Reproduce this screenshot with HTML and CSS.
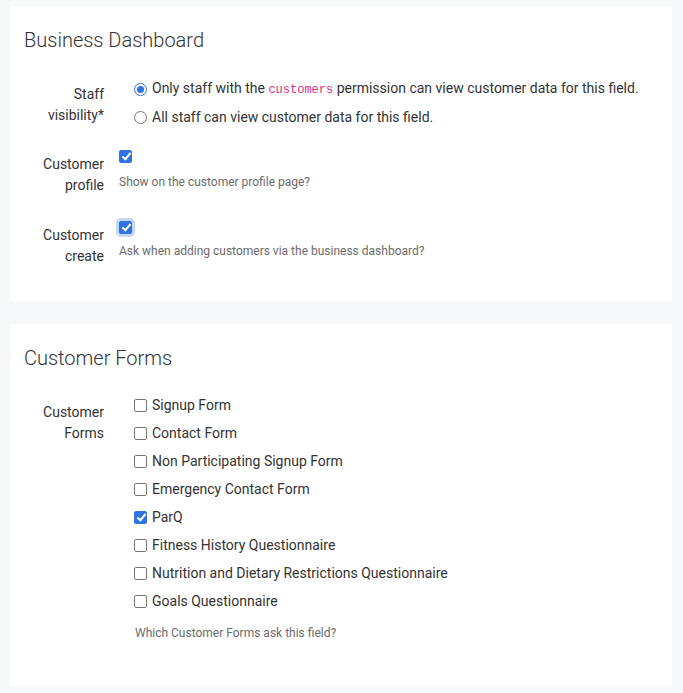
FILE: index.html
```html
<!DOCTYPE html>
<html lang="en">
<head>
<meta charset="utf-8">
<title>Custom field settings</title>
<link rel="stylesheet" href="styles.css">
</head>
<body>
<main class="page">
  <section class="card card-dashboard">
    <h2 class="card-title">Business Dashboard</h2>

    <div class="field field-visibility">
      <div class="field-label">Staff<br>visibility*</div>
      <div class="field-control options">
        <label class="option">
          <span class="radio is-checked"></span>
          <span>Only staff with the <code class="perm">customers</code> permission can view customer data for this field.</span>
        </label>
        <label class="option">
          <span class="radio"></span>
          <span>All staff can view customer data for this field.</span>
        </label>
      </div>
    </div>

    <div class="field field-profile">
      <div class="field-label">Customer<br>profile</div>
      <div class="field-control">
        <div class="check-line"><span class="check is-checked"></span></div>
        <p class="help">Show on the customer profile page?</p>
      </div>
    </div>

    <div class="field field-create">
      <div class="field-label">Customer<br>create</div>
      <div class="field-control">
        <div class="check-line"><span class="check is-checked is-focused"></span></div>
        <p class="help help-create">Ask when adding customers via the business dashboard?</p>
      </div>
    </div>
  </section>

  <section class="card card-forms">
    <h2 class="card-title">Customer Forms</h2>

    <div class="field field-forms">
      <div class="field-label">Customer<br>Forms</div>
      <div class="field-control options">
        <label class="option"><span class="check"></span><span>Signup Form</span></label>
        <label class="option"><span class="check"></span><span>Contact Form</span></label>
        <label class="option"><span class="check"></span><span>Non Participating Signup Form</span></label>
        <label class="option"><span class="check"></span><span>Emergency Contact Form</span></label>
        <label class="option"><span class="check is-checked"></span><span>ParQ</span></label>
        <label class="option"><span class="check"></span><span>Fitness History Questionnaire</span></label>
        <label class="option"><span class="check"></span><span>Nutrition and Dietary Restrictions Questionnaire</span></label>
        <label class="option"><span class="check"></span><span>Goals Questionnaire</span></label>
        <p class="help help-forms">Which Customer Forms ask this field?</p>
      </div>
    </div>
  </section>
</main>
</body>
</html>
```

FILE: styles.css
```css
* {
  box-sizing: border-box;
}

html,
body {
  margin: 0;
  background: #f7f8fa;
}

body {
  font-family: Roboto, "Liberation Sans", Arial, sans-serif;
  font-size: 14px;
  color: #333;
}

.page {
  display: flex;
  flex-direction: column;
  gap: 23px;
  padding: 6px 11px 6px 10px;
}

.card {
  background: #fff;
  padding: 22px 14px 0 14px;
}

.card-dashboard {
  height: 295px;
}

.card-forms {
  height: 363px;
}

.card-title {
  margin: 0;
  font-size: 20px;
  font-weight: 300;
  line-height: 24px;
  color: #333;
}

/* label column + control column */
.field {
  display: grid;
  grid-template-columns: 80px 1fr;
  column-gap: 15px;
}

.field-label {
  text-align: right;
  line-height: 21px;
  padding-top: 8px;
}

.field-visibility {
  margin-top: 23px;
}

.field-visibility .field-label {
  padding-top: 9px;
}

.field-profile {
  margin-top: 15px;
}

.field-create {
  margin-top: 21px;
}

.field-forms {
  margin-top: 21px;
}

.field-forms .field-label {
  padding-top: 11px;
}

.options {
  display: flex;
  flex-direction: column;
  padding-left: 15px;
}

.option {
  display: flex;
  align-items: center;
  gap: 5px;
  height: 28px;
  line-height: 28px;
  white-space: nowrap;
}

.perm {
  font-family: "Liberation Mono", "DejaVu Sans Mono", monospace;
  font-size: 12px;
  color: #d63384;
}

.check-line {
  display: flex;
  align-items: center;
  height: 20px;
}

.help {
  margin: 7px 0 0;
  font-size: 12px;
  line-height: 18px;
  color: #6c6c6c;
}

.help-create {
  margin-top: 5px;
}

.help-forms {
  margin-top: 9px;
  padding-left: 1px;
}

/* checkbox and radio controls */
.check,
.radio {
  flex: none;
  display: inline-block;
  width: 13px;
  height: 13px;
  background: #fff;
  border: 1px solid #777;
  position: relative;
}

.check {
  border-radius: 2px;
}

.radio {
  border-radius: 50%;
}

.check.is-checked {
  background: #2f72e4;
  border-color: #2f72e4;
}

.check.is-checked::after {
  content: "";
  position: absolute;
  left: 3.5px;
  top: 0.5px;
  width: 3px;
  height: 7px;
  border: solid #fff;
  border-width: 0 2px 2px 0;
  transform: rotate(40deg);
}

.check.is-focused {
  box-shadow: 0 0 0 3px #c3d8f7;
}

.radio.is-checked {
  border-color: #2f72e4;
}

.radio.is-checked::after {
  content: "";
  position: absolute;
  inset: 2px;
  border-radius: 50%;
  background: #2f72e4;
}
```
